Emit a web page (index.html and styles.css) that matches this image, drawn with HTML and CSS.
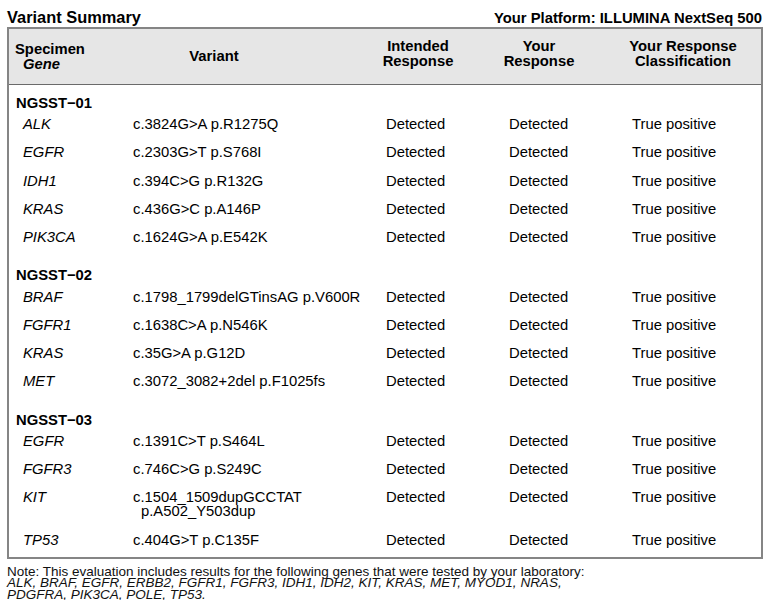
FILE: index.html
```html
<!DOCTYPE html>
<html>
<head>
<meta charset="utf-8">
<link rel="stylesheet" href="styles.css">
</head>
<body>
<div class="page">
  <div class="titlebar">
    <div class="title">Variant Summary</div>
    <div class="platform">Your Platform: ILLUMINA NextSeq 500</div>
  </div>
  <div class="table">
    <div class="thead">
      <div class="h h1"><div>Specimen</div><div class="hgene">Gene</div></div>
      <div class="h h2">Variant</div>
      <div class="h h3">Intended<br>Response</div>
      <div class="h h4">Your<br>Response</div>
      <div class="h h5">Your Response<br>Classification</div>
    </div>
    <div class="tbody">
      <div class="section first">NGSST−01</div>
      <div class="row"><div class="c gene">ALK</div><div class="c var">c.3824G&gt;A p.R1275Q</div><div class="c int">Detected</div><div class="c your">Detected</div><div class="c cls">True positive</div></div>
      <div class="row"><div class="c gene">EGFR</div><div class="c var">c.2303G&gt;T p.S768I</div><div class="c int">Detected</div><div class="c your">Detected</div><div class="c cls">True positive</div></div>
      <div class="row"><div class="c gene">IDH1</div><div class="c var">c.394C&gt;G p.R132G</div><div class="c int">Detected</div><div class="c your">Detected</div><div class="c cls">True positive</div></div>
      <div class="row"><div class="c gene">KRAS</div><div class="c var">c.436G&gt;C p.A146P</div><div class="c int">Detected</div><div class="c your">Detected</div><div class="c cls">True positive</div></div>
      <div class="row"><div class="c gene">PIK3CA</div><div class="c var">c.1624G&gt;A p.E542K</div><div class="c int">Detected</div><div class="c your">Detected</div><div class="c cls">True positive</div></div>

      <div class="section">NGSST−02</div>
      <div class="row"><div class="c gene">BRAF</div><div class="c var">c.1798_1799delGTinsAG p.V600R</div><div class="c int">Detected</div><div class="c your">Detected</div><div class="c cls">True positive</div></div>
      <div class="row"><div class="c gene">FGFR1</div><div class="c var">c.1638C&gt;A p.N546K</div><div class="c int">Detected</div><div class="c your">Detected</div><div class="c cls">True positive</div></div>
      <div class="row"><div class="c gene">KRAS</div><div class="c var">c.35G&gt;A p.G12D</div><div class="c int">Detected</div><div class="c your">Detected</div><div class="c cls">True positive</div></div>
      <div class="row"><div class="c gene">MET</div><div class="c var">c.3072_3082+2del p.F1025fs</div><div class="c int">Detected</div><div class="c your">Detected</div><div class="c cls">True positive</div></div>

      <div class="section">NGSST−03</div>
      <div class="row"><div class="c gene">EGFR</div><div class="c var">c.1391C&gt;T p.S464L</div><div class="c int">Detected</div><div class="c your">Detected</div><div class="c cls">True positive</div></div>
      <div class="row"><div class="c gene">FGFR3</div><div class="c var">c.746C&gt;G p.S249C</div><div class="c int">Detected</div><div class="c your">Detected</div><div class="c cls">True positive</div></div>
      <div class="row"><div class="c gene">KIT</div><div class="c var"><span class="vl">c.1504_1509dupGCCTAT</span><span class="vl wrap">p.A502_Y503dup</span></div><div class="c int">Detected</div><div class="c your">Detected</div><div class="c cls">True positive</div></div>
      <div class="row"><div class="c gene">TP53</div><div class="c var">c.404G&gt;T p.C135F</div><div class="c int">Detected</div><div class="c your">Detected</div><div class="c cls">True positive</div></div>
    </div>
  </div>
  <div class="note">
    <div>Note: This evaluation includes results for the following genes that were tested by your laboratory:</div>
    <div class="genes">ALK, BRAF, EGFR, ERBB2, FGFR1, FGFR3, IDH1, IDH2, KIT, KRAS, MET, MYOD1, NRAS,</div>
    <div class="genes">PDGFRA, PIK3CA, POLE, TP53.</div>
  </div>
</div>
</body>
</html>
```

FILE: styles.css
```css
html, body {
  margin: 0;
  padding: 0;
  background: #ffffff;
}
body {
  font-family: "Liberation Sans", Arial, sans-serif;
  color: #000;
}
.page {
  padding: 9px 9px 0 7px;
}
.titlebar {
  display: flex;
  justify-content: space-between;
  align-items: baseline;
  line-height: 17px;
}
.title {
  font-weight: bold;
  font-size: 16.4px;
}
.platform {
  font-weight: bold;
  font-size: 14.8px;
  padding-right: 1px;
}
.table {
  border: 2px solid #858585;
}
.thead {
  display: grid;
  grid-template-columns: 118px 251px 122px 124px 1fr;
  height: 55px;
  background: #e6e6e6;
  border-bottom: 1px solid #6a6a6a;
  align-items: center;
  font-weight: bold;
  font-size: 14.8px;
  line-height: 15px;
}
.h1 {
  padding-left: 6px;
}
.hgene {
  font-style: italic;
  padding-left: 8px;
}
.h2 {
  text-align: center;
  padding-right: 77px;
}
.h3 {
  text-align: center;
  padding-right: 42px;
  padding-bottom: 6px;
}
.h4 {
  text-align: center;
  padding-right: 46px;
  padding-bottom: 6px;
}
.h5 {
  text-align: center;
  padding-right: 19px;
  padding-bottom: 6px;
}
.tbody {
  padding-bottom: 3px;
  font-size: 14.8px;
  line-height: 14px;
}
.section {
  font-weight: bold;
  padding-left: 7px;
  margin-top: 17px;
}
.section.first {
  margin-top: 11px;
}
.row {
  display: grid;
  grid-template-columns: 118px 251px 122px 124px 1fr;
  padding: 7.15px 0;
}
.gene {
  font-style: italic;
  padding-left: 14px;
}
.var {
  padding-left: 6px;
}
.vl {
  display: block;
}
.vl.wrap {
  padding-left: 8px;
}
.int {
  padding-left: 8px;
}
.your {
  padding-left: 9px;
}
.cls {
  padding-left: 8px;
}
.note {
  margin-top: 7px;
  font-size: 13.5px;
  line-height: 11.5px;
  color: #111;
}
.genes {
  font-style: italic;
}
```
